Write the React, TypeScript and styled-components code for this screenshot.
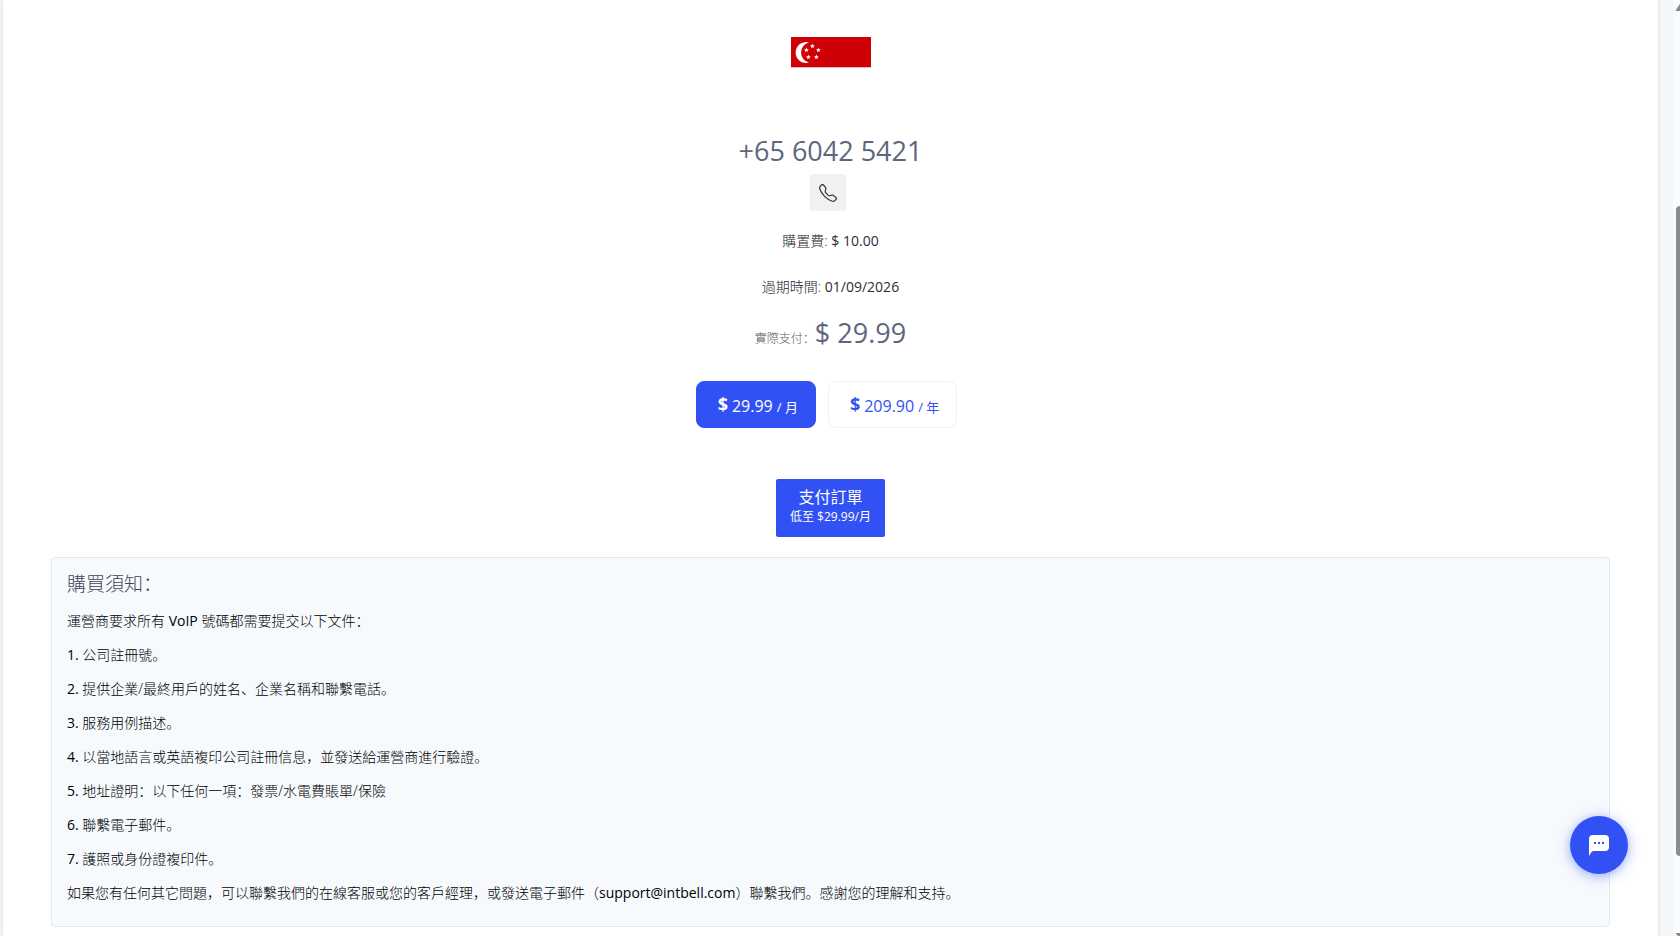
import React from "react";
import styled, { createGlobalStyle } from "styled-components";
import { BsTelephone } from "react-icons/bs";

const GlobalStyle = createGlobalStyle`
  *, *::before, *::after { box-sizing: border-box; }
  body {
    margin: 0;
    background: #f3f7fa;
    color: #2b2f33;
    font-family: "Open Sans", "Noto Sans CJK SC", sans-serif;
    font-size: 14px;
    line-height: 20px;
    font-weight: 400;
  }
  button { font-family: inherit; cursor: pointer; }
  h2, h3, p, ol { margin: 0; padding: 0; font-weight: inherit; }
`;

const Shell = styled.div`
  display: grid;
  grid-template-columns: minmax(0, 1fr) 7px;
  height: 100vh;
  overflow: hidden;
`;

const Content = styled.div`
  padding: 0 15px 0 3px;
  overflow: hidden;
`;

const Card = styled.main`
  display: flex;
  flex-direction: column;
  align-items: center;
  min-height: 100vh;
  padding: 37px 48px 0;
  background: #fff;
  box-shadow: 0 0 4px rgba(40, 70, 90, 0.16);
`;

const Flag = styled.svg`
  display: block;
  width: 80px;
  height: 31px;
`;

const PhoneNumber = styled.h2`
  margin-top: 67px;
  color: #5f667c;
  font-size: 27px;
  line-height: 32px;
`;

const CallButton = styled.button`
  display: flex;
  align-items: center;
  justify-content: center;
  width: 36px;
  height: 37px;
  margin: 7px 5px 0 0;
  padding: 0;
  border: 0;
  border-radius: 4px;
  background: #f1f1f1;
  color: #333;
`;

const Facts = styled.div`
  display: flex;
  flex-direction: column;
  gap: 26px;
  margin-top: 20px;
  text-align: center;
`;

const Muted = styled.span`
  color: #22262c;
  font-weight: 300;
`;

const Total = styled.p`
  display: flex;
  align-items: baseline;
  height: 32px;
  margin-top: 20px;
  font-size: 12px;
  line-height: 32px;
  color: #5c606c;
  font-weight: 300;
`;

const Amount = styled.strong`
  color: #5f667c;
  font-size: 27px;
  font-weight: 400;
`;

const Plans = styled.div`
  display: flex;
  gap: 12px;
  margin: 32px 8px 0 0;
`;

const PlanButton = styled.button<{ $active?: boolean }>`
  display: flex;
  align-items: baseline;
  gap: 4px;
  height: 47px;
  padding: 1px 17px 0 21px;
  border: 1px solid ${(p) => (p.$active ? "#3251f4" : "#f1f1f3")};
  border-radius: 8px;
  background: ${(p) => (p.$active ? "#3251f4" : "#fff")};
  color: ${(p) => (p.$active ? "#fff" : "#3251f4")};
  font-size: 16px;
  line-height: 46px;
`;

const Currency = styled.span`
  align-self: center;
  font-size: 18px;
  font-weight: 700;
  line-height: 40px;
  padding-bottom: 3px;
`;

const Period = styled.span`
  font-size: 13px;
`;

const PayButton = styled.button`
  display: flex;
  flex-direction: column;
  align-items: center;
  height: 58px;
  margin-top: 51px;
  padding: 8px 14px;
  border: 0;
  border-radius: 2px;
  background: #3251f4;
  color: #fff;
  font-size: 16px;
  line-height: 20px;
  font-weight: 400;
`;

const PayHint = styled.span`
  font-size: 12px;
  font-weight: 400;
`;

const Notice = styled.section`
  align-self: stretch;
  margin-top: 20px;
  padding: 13px 15px 23px;
  border: 1px solid #d9edf3;
  border-radius: 4px;
  background: #f6fafd;
  color: #000;
  font-weight: 300;
`;

const NoticeTitle = styled.h3`
  color: #3f4558;
  font-size: 19px;
  line-height: 26px;
  font-weight: 300;
`;

const NoticeText = styled.p`
  margin-top: 14px;
`;

const NoticeList = styled.ol`
  list-style: none;
`;

const NoticeItem = styled.li`
  margin-top: 14px;
`;

const Latin = styled.span`
  font-weight: 400;
`;

const ChatButton = styled.button`
  position: fixed;
  right: 52px;
  bottom: 62px;
  display: flex;
  align-items: center;
  justify-content: center;
  width: 58px;
  height: 58px;
  padding: 0;
  border: 0;
  border-radius: 50%;
  background: #3251f4;
  box-shadow: 0 2px 12px rgba(50, 81, 244, 0.5);
`;

const Scrollbar = styled.div`
  display: flex;
  flex-direction: column;
  align-items: flex-end;
  padding: 4px 0 0;
  background: #fbfbfb;
  overflow: hidden;
`;

const Thumb = styled.div`
  flex: 650;
  width: 4px;
  border-radius: 4px 0 0 4px;
  background: #8b8b8b;
`;

const Track = styled.div<{ $size: number }>`
  flex: ${(p) => p.$size};
`;

const requirements = [
  "公司註冊號。",
  "提供企業/最終用戶的姓名、企業名稱和聯繫電話。",
  "服務用例描述。",
  "以當地語言或英語複印公司註冊信息，並發送給運營商進行驗證。",
  "地址證明：以下任何一項：發票/水電費賬單/保險",
  "聯繫電子郵件。",
  "護照或身份證複印件。",
];

const stars = [
  [21, 9],
  [15, 13],
  [27, 13],
  [17, 20],
  [25, 20],
];

function SingaporeFlag() {
  return (
    <Flag viewBox="0 0 80 31" role="img" aria-label="Singapore">
      <rect width="80" height="30" fill="#d00007" />
      <rect y="30" width="80" height="1" fill="#f3b6b8" />
      <path d="M18 5.4A10.5 10.5 0 1 0 18 25.6A10.4 10.4 0 0 1 18 5.4Z" fill="#fff" />
      {stars.map(([x, y]) => (
        <path
          key={`${x}-${y}`}
          transform={`translate(${x + 0.4} ${y})`}
          d="M0-2.4L.7-.8 2.4-.7 1.1.4 1.5 2.1 0 1.200-1.5 2.1-1.1.4-2.4-.7-.7-.8Z"
          fill="#fff"
        />
      ))}
    </Flag>
  );
}

function ChatIcon() {
  return (
    <svg width="20" height="21" viewBox="0 0 20 21" aria-hidden="true">
      <path
        d="M4 0H16A4 4 0 0 1 20 4V12A4 4 0 0 1 16 16H5C3 16 1.5 18 .5 20.5H0V4A4 4 0 0 1 4 0Z"
        fill="#fff"
      />
      <path d="M5 7h2v2H5zM9 7h2v2H9zM13 7h2v2h-2z" fill="#3251f4" />
    </svg>
  );
}

export default function App() {
  return (
    <>
      <GlobalStyle />
      <Shell>
        <Content>
          <Card>
            <SingaporeFlag />
            <PhoneNumber>+65 6042 5421</PhoneNumber>
            <CallButton type="button" aria-label="Call">
              <BsTelephone size={18} />
            </CallButton>
            <Facts>
              <p>
                <Muted>購置費:</Muted> $ 10.00
              </p>
              <p>
                <Muted>過期時間:</Muted> 01/09/2026
              </p>
            </Facts>
            <Total>
              實際支付： <Amount>$ 29.99</Amount>
            </Total>
            <Plans>
              <PlanButton type="button" $active>
                <Currency>$</Currency>29.99<Period>/ 月</Period>
              </PlanButton>
              <PlanButton type="button">
                <Currency>$</Currency>209.90<Period>/ 年</Period>
              </PlanButton>
            </Plans>
            <PayButton type="button">
              支付訂單
              <PayHint>低至 $29.99/月</PayHint>
            </PayButton>
            <Notice>
              <NoticeTitle>購買須知：</NoticeTitle>
              <NoticeText>
                運營商要求所有 <Latin>VoIP</Latin> 號碼都需要提交以下文件：
              </NoticeText>
              <NoticeList>
                {requirements.map((text, i) => (
                  <NoticeItem key={text}>
                    <Latin>{i + 1}.</Latin> {text}
                  </NoticeItem>
                ))}
              </NoticeList>
              <NoticeText>
                如果您有任何其它問題，可以聯繫我們的在線客服或您的客戶經理，或發送電子郵件（
                <Latin>support@intbell.com</Latin>）聯繫我們。感謝您的理解和支持。
              </NoticeText>
            </Notice>
          </Card>
        </Content>
        <Scrollbar aria-hidden="true">
          <svg width="4" height="7" viewBox="0 0 4 7">
            <path d="M0 7V5.5L4 0V7Z" fill="#8b8b8b" />
          </svg>
          <Track $size={195} />
          <Thumb />
          <Track $size={77} />
          <svg width="4" height="3" viewBox="0 0 4 3">
            <path d="M0 0H4V3H2L0 1Z" fill="#8b8b8b" />
          </svg>
        </Scrollbar>
      </Shell>
      <ChatButton type="button" aria-label="Chat">
        <ChatIcon />
      </ChatButton>
    </>
  );
}
